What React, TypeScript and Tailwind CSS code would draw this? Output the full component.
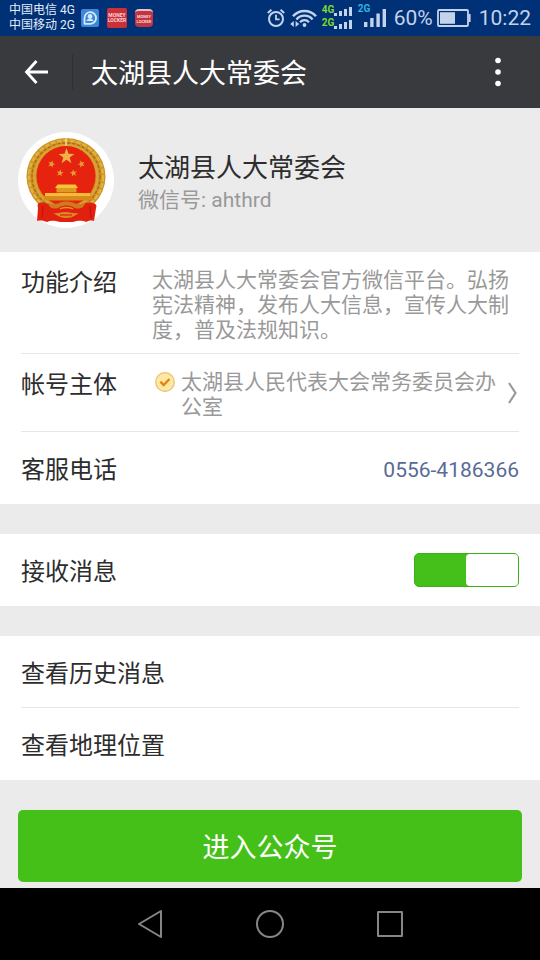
import React, { useState } from 'react';

const STAR = '0,-10 2.4,-3.2 9.5,-3.1 3.8,1.2 5.9,8.1 0,4 -5.9,8.1 -3.8,1.2 -9.5,-3.1 -2.4,-3.2';

const AlarmIcon = () => (
  <svg width="20" height="20" viewBox="0 0 20 20" fill="none" stroke="currentColor" aria-hidden="true">
    <circle cx="10" cy="11" r="7" strokeWidth="2" />
    <path d="M10 6.8v4.6h3.6" strokeWidth="1.8" />
    <path d="M1.8 5 5.4 1.8M18.2 5 14.6 1.8" strokeWidth="2" />
  </svg>
);

const WifiIcon = () => (
  <svg width="28" height="20" viewBox="0 0 28 20" fill="none" stroke="currentColor" aria-hidden="true">
    <path d="M3 8.2a15.2 15.2 0 0 1 23 0" strokeWidth="2.5" />
    <path d="M6.4 11.4a10.6 10.6 0 0 1 16.2 0" strokeWidth="2.3" />
    <path d="M10 14.2a6 6 0 0 1 9 0" strokeWidth="2.1" />
    <circle cx="14.5" cy="17" r="1.9" fill="currentColor" stroke="none" />
    <path d="M3.8 13v6L.2 16zM5.6 13v6l3.6-3z" fill="currentColor" stroke="none" />
  </svg>
);

const SmallBars = () => (
  <svg width="18" height="10" viewBox="0 0 18 10" fill="currentColor" aria-hidden="true">
    <path d="M0 7h3v3H0zM5 5h3v5H5zM10 3h3v7h-3zM15 1h3v9h-3z" />
  </svg>
);

const BigBars = () => (
  <svg width="22" height="20" viewBox="0 0 22 20" fill="currentColor" aria-hidden="true">
    <path d="M0 14h3.4v5H0zM6.2 10h3.4v9H6.2zM12.4 5.6h3.4V19h-3.4zM18.6 1H22v18h-3.4z" />
  </svg>
);

const BatteryIcon = () => (
  <svg width="34" height="18" viewBox="0 0 34 18" fill="none" aria-hidden="true">
    <rect x="1" y="1" width="30" height="16" rx="1" stroke="currentColor" strokeWidth="1.8" />
    <path d="M3 3.2h15v11.6H3z" fill="currentColor" />
    <path d="M32.6 5v8" stroke="currentColor" strokeWidth="2" />
  </svg>
);

const Emblem = () => (
  <svg className="size-24 shrink-0" viewBox="0 0 96 96" role="img" aria-label="太湖县人大常委会">
    <circle cx="48" cy="48" r="48" fill="#fff" />
    {/* wheat wreath */}
    <ellipse cx="48" cy="44.5" rx="39.5" ry="38.5" fill="#cc9226" />
    <ellipse cx="48" cy="44.5" rx="37" ry="36" fill="none" stroke="#e0b23e" strokeWidth="2.5" strokeDasharray="5 1.5" />
    <ellipse cx="48" cy="44.5" rx="34" ry="33.5" fill="none" stroke="#a96c18" strokeWidth="1.4" strokeDasharray="3 2" />
    <ellipse cx="48" cy="44.5" rx="31.5" ry="31.5" fill="none" stroke="#dba233" strokeWidth="2.5" />
    <path d="M48 6v8" stroke="#f6e3a0" strokeWidth="1.2" />
    <ellipse cx="48" cy="44" rx="29.5" ry="30" fill="#e6230f" />
    {/* red drapery */}
    <path d="M21 71c4-1 8 0 11 2h32c3-2 7-3 11-2 3 1 4 2 3 5l-2 13c-3-1-6 0-8 1-5-2-9-1-13 0H42c-5-1-9-2-13 0-3-1-6-2-10-1l1-13c-1-3 0-5 1-5z" fill="#e2200f" />
    <path d="M25 74l-1 12M72 74l1 12" stroke="#bd170b" strokeWidth="1.2" />
    <g fill="#e8a036">
      <polygon points={STAR} transform="translate(48.5 24.5) scale(.84)" fill="#efb04a" />
      <polygon points={STAR} transform="translate(33.5 32) scale(.38) rotate(20)" />
      <polygon points={STAR} transform="translate(63.5 32) scale(.38) rotate(-20)" />
      <polygon points={STAR} transform="translate(42 41) scale(.38) rotate(10)" />
      <polygon points={STAR} transform="translate(55.5 41) scale(.38) rotate(-10)" />
    </g>
    {/* gate tower */}
    <path d="M39.5 52.500h18L60 56H37z" fill="#f5c336" />
    <path d="M38.500 56h20v4.500h-20z" fill="#dd9a24" />
    <path d="M27 61h45v3H27z" fill="#f5bd35" />
    <path d="M26 64h47v4.500H26z" fill="#d98a1c" />
    {/* gear and knot */}
    <path d="M29 70c4 2 8 3 12 1 4-2 11-2 15 0 4 2 8 1 12-1l-3 5c-3 2-7 2-10 0-4-2-9-2-13 0-3 2-7 2-10 0z" fill="#cf7a1d" />
    <path d="M42 77c3-2 10-2 13 0" fill="none" stroke="#e99a2b" strokeWidth="1.500" />
    <path d="M35 81c4 1 7-1 12-1 6 0 9 2 14 1-4 2-6 5-13 5-6 0-9-3-13-5z" fill="#dc8a25" />
    <path d="M42 83h12" stroke="#e2200f" strokeWidth="1.200" />
  </svg>
);

const VerifiedIcon = () => (
  <svg className="mt-0.5 size-5 shrink-0" viewBox="0 0 20 20" fill="none" aria-hidden="true">
    <circle cx="10" cy="10" r="9.300" fill="#fde9a6" stroke="#efbb6c" strokeWidth="1.200" />
    <path d="M5.400 9.600l3.300 3.400 5.800-6" stroke="#ea8010" strokeWidth="2.400" />
  </svg>
);

const StatusBar = () => (
  <div className="flex h-9 items-center justify-between bg-[#003076] px-[9px] text-[#c3d3ea]">
    <div className="flex items-center">
      <div className="w-[72px] text-xs leading-[15px] whitespace-nowrap text-[#e3ecf8]">
        <p>中国电信 4G</p>
        <p>中国移动 2G</p>
      </div>
      <svg width="18" height="18" viewBox="0 0 18 18" fill="none" aria-hidden="true">
        <rect width="18" height="18" rx="2" fill="#3d86d8" />
        <path d="M3.500 15.500V9A5.800 5.800 0 1 1 9 14.800H3.500" stroke="#d5e9fb" strokeWidth="1.800" />
        <circle cx="9" cy="7.500" r="2.400" fill="#d5e9fb" />
        <path d="M5.500 12c.5-3 6.500-3 7 0z" fill="#d5e9fb" />
      </svg>
      <div className="ml-2 flex size-5 flex-col items-center justify-center rounded-xs bg-[#cb3039] text-[5px] leading-[5px] font-bold text-[#f6d5d8]">
        <span>MONEY</span>
        <span>LOCKER</span>
      </div>
      <div className="ml-2 flex size-[18px] flex-col items-center justify-center rounded-sm border-t-2 border-[#d9c3cf] bg-[#c23540] text-[4px] leading-[5px] font-bold text-[#f6d5d8]">
        <span>MONEY</span>
        <span>LOCKER</span>
      </div>
    </div>
    <div className="flex items-center">
      <AlarmIcon />
      <span className="ml-1">
        <WifiIcon />
      </span>
      <div className="ml-1 pb-1 text-[10px] leading-[13px] font-bold text-[#7ddc2c]">
        <div className="flex items-end">
          <span className="w-3">4G</span>
          <span className="text-[#c3d3ea]"><SmallBars /></span>
        </div>
        <div className="flex items-end">
          <span className="w-3">2G</span>
          <span className="text-[#c3d3ea]"><SmallBars /></span>
        </div>
      </div>
      <div className="relative ml-3">
        <span className="absolute -top-1.5 -left-1.5 text-[10px] leading-[13px] font-bold text-[#2fb3e0]">2G</span>
        <BigBars />
      </div>
      <span className="ml-2 text-[21px] leading-6">60%</span>
      <span className="ml-1">
        <BatteryIcon />
      </span>
      <span className="ml-2 text-[21px] leading-6">10:22</span>
    </div>
  </div>
);

const Header = () => (
  <header className="flex h-18 items-center bg-[#393a3e] text-white">
    <button type="button" aria-label="返回" className="flex h-9 w-[73px] items-center border-r border-[#2e2f33] pl-6">
      <svg width="26" height="26" viewBox="0 0 26 26" fill="none" stroke="currentColor" strokeWidth="2.800" aria-hidden="true">
        <path d="M12.500 2 2.500 13l10 11M2.500 13H24" />
      </svg>
    </button>
    <h1 className="ml-[18px] flex-1 pt-1 text-[27px] leading-9">太湖县人大常委会</h1>
    <button type="button" aria-label="更多" className="flex h-18 w-[84px] items-center justify-center">
      <svg width="6" height="30" viewBox="0 0 6 30" fill="currentColor" aria-hidden="true">
        <circle cx="3" cy="3.500" r="2.800" />
        <circle cx="3" cy="15" r="2.800" />
        <circle cx="3" cy="26.500" r="2.800" />
      </svg>
    </button>
  </header>
);

interface InfoRowProps {
  label: string;
  className?: string;
  children: React.ReactNode;
}

const InfoRow: React.FC<InfoRowProps> = ({ label, className = '', children }) => (
  <div className={`flex pt-4 ${className}`}>
    <dt className="w-[131px] shrink-0 text-2xl leading-[30px] text-[#2d2d2d]">{label}</dt>
    <dd className="flex min-w-0 flex-1 text-[21px] leading-[25px] text-[#999]">{children}</dd>
  </div>
);

const Switch = ({ id, checked, onChange }: { id: string; checked: boolean; onChange: (v: boolean) => void }) => (
  <div className="relative h-[34px] w-[105px]">
    <input
      id={id}
      type="checkbox"
      role="switch"
      checked={checked}
      onChange={(e) => onChange(e.target.checked)}
      className="peer size-full cursor-pointer appearance-none rounded-[5px] border border-[#3fae1c] bg-gray-300 checked:bg-[#45c01a]"
    />
    <span className="pointer-events-none absolute top-px left-px h-8 w-[52px] rounded-[4px] bg-white peer-checked:right-px peer-checked:left-auto" />
  </div>
);

const NavBar = () => (
  <nav className="mt-auto flex h-18 items-center justify-center gap-[92px] bg-black text-[#868686]">
    <button type="button" aria-label="后退">
      <svg width="28" height="30" viewBox="0 0 28 30" fill="none" stroke="currentColor" strokeWidth="2" strokeLinejoin="round" aria-hidden="true">
        <path d="M25 2v26L3 15z" />
      </svg>
    </button>
    <button type="button" aria-label="主屏幕">
      <svg width="28" height="30" viewBox="0 0 28 30" fill="none" stroke="currentColor" strokeWidth="2" aria-hidden="true">
        <circle cx="14" cy="15" r="13" />
      </svg>
    </button>
    <button type="button" aria-label="最近任务">
      <svg width="28" height="30" viewBox="0 0 28 30" fill="none" stroke="currentColor" strokeWidth="2" strokeLinejoin="round" aria-hidden="true">
        <rect x="2" y="3" width="24" height="24" />
      </svg>
    </button>
  </nav>
);

export default function App() {
  const [receive, setReceive] = useState(true);

  return (
    <div lang="zh-CN" className="flex min-h-screen flex-col bg-[#ebebeb] font-[Roboto,'Noto_Sans_CJK_SC',sans-serif]">
      <StatusBar />
      <Header />

      <main className="pb-1.5">
        <section className="flex h-36 items-center gap-6 px-[18px]">
          <Emblem />
          <div className="pt-2">
            <h2 className="text-[26px] leading-8 text-[#2d2d2d]">太湖县人大常委会</h2>
            <p className="text-[21px] leading-8 text-[#999]">微信号: ahthrd</p>
          </div>
        </section>

        <dl className="bg-white px-[21px]">
          <InfoRow label="功能介绍" className="min-h-[102px] border-b border-[#e6e6e6]">
            <p>太湖县人大常委会官方微信平台。弘扬宪法精神，发布人大信息，宣传人大制度，普及法规知识。</p>
          </InfoRow>
          <InfoRow label="帐号主体" className="min-h-[78px] border-b border-[#e6e6e6]">
            <button type="button" className="flex w-full items-start gap-1.5 pl-[3px] text-left">
              <VerifiedIcon />
              <span className="flex-1">太湖县人民代表大会常务委员会办公室</span>
              <svg className="mt-3 shrink-0" width="12" height="22" viewBox="0 0 12 22" fill="none" stroke="currentColor" strokeWidth="2.200" aria-hidden="true">
                <path d="M2 1l6.500 10L2 21" />
              </svg>
            </button>
          </InfoRow>
          <div className="flex h-18 items-center justify-between pt-1">
            <dt className="text-2xl leading-7 text-[#2d2d2d]">客服电话</dt>
            <dd className="text-[21px] leading-7">
              <a href="tel:0556-4186366" className="text-[#576b95]">0556-4186366</a>
            </dd>
          </div>
        </dl>

        <section className="mt-[30px] flex h-18 items-center justify-between bg-white px-[21px]">
          <label htmlFor="receive" className="pt-1 text-2xl leading-7 text-[#2d2d2d]">接收消息</label>
          <Switch id="receive" checked={receive} onChange={setReceive} />
        </section>

        <section className="mt-[30px] bg-white px-[21px] text-2xl text-[#2d2d2d]">
          <button type="button" className="flex h-18 w-full items-center border-b border-[#e6e6e6] pt-1 leading-7">
            查看历史消息
          </button>
          <button type="button" className="flex h-18 w-full items-center pt-1 leading-7">
            查看地理位置
          </button>
        </section>

        <div className="mt-[30px] px-[18px]">
          <button type="button" className="h-18 w-full rounded-[5px] bg-[#45c018] pt-1 text-[27px] leading-9 text-white">
            进入公众号
          </button>
        </div>
      </main>

      <NavBar />
    </div>
  );
}
